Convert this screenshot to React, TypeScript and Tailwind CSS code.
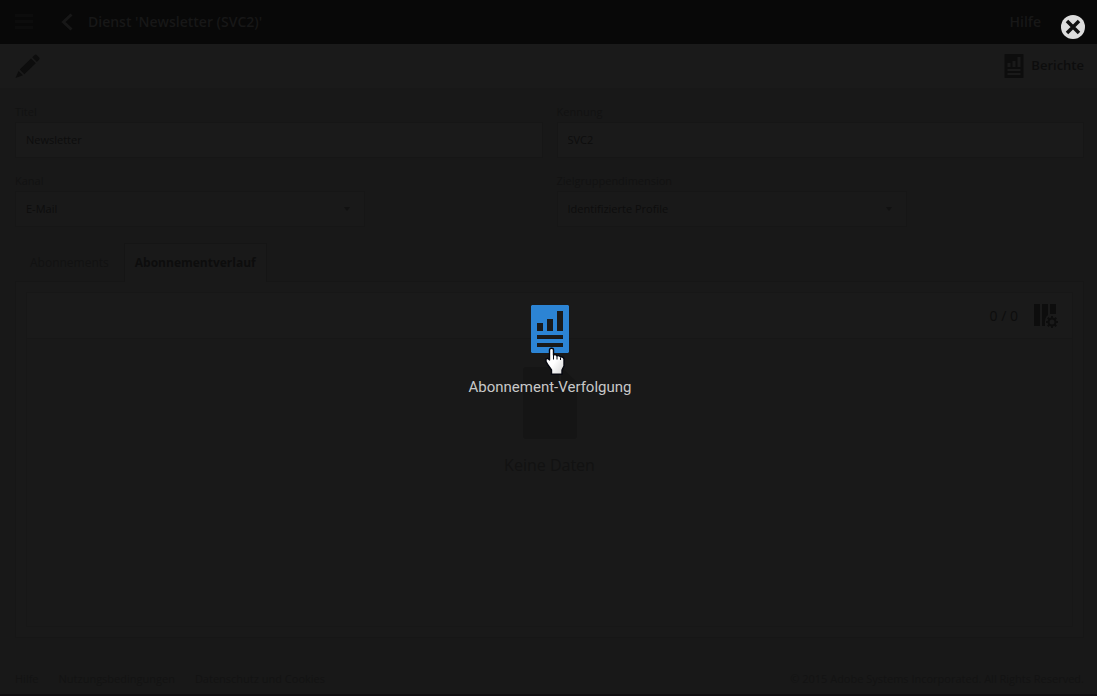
import React from "react";

function ReportIcon({ className }: { className: string }) {
  return (
    <svg viewBox="0 0 38 48" className={className} fill="currentColor" aria-hidden="true">
      <path
        fillRule="evenodd"
        d="M1 0h36l1 1v46l-1 1H1l-1-1V1zM6 18v8h6v-8zM16 14v12h6V14zM26 6v20h6V6zM6 30v4h26v-4zM6 38v4h26v-4z"
      />
    </svg>
  );
}

function PencilIcon() {
  return (
    <svg viewBox="0 0 26 26" className="size-6.5" fill="currentColor" aria-hidden="true">
      <path d="M0.500 25L3.500 18L8 22.200zM4.700 16.600L16 5.500L20.800 10.200L9.300 21.200zM17.200 4.300L19.700 2q1-1 2 0l2.500 2.500q1 1 0 2l-2.300 2.500z" />
    </svg>
  );
}

function ColumnsIcon() {
  return (
    <svg viewBox="0 0 24 24" className="size-6" aria-hidden="true">
      <path fill="currentColor" d="M0 0h6v22H0zM8 0h6v11q-4 3-3 11H8zM16 0h6v10h-6z" />
      <circle cx="18" cy="18" r="3.500" fill="none" stroke="currentColor" strokeWidth="2" />
      <path
        stroke="currentColor"
        strokeWidth="2"
        d="M18 12v2M18 22v2M12 18h2M22 18h2M13.800 13.800l1.400 1.400M20.800 20.800l1.400 1.400M13.800 22.200l1.400-1.400M20.800 15.200l1.400-1.400"
      />
    </svg>
  );
}

function HandPointer() {
  return (
    <svg viewBox="0 0 22 28" className="absolute top-[42px] left-3.5 h-7 w-5.5" aria-hidden="true">
      <defs>
        <linearGradient id="hand" x1="0" y1="0" x2="1" y2="1">
          <stop offset="0.500" stopColor="#ffffff" />
          <stop offset="1" stopColor="#d4d4d4" />
        </linearGradient>
      </defs>
      <path
        d="M4.500 3q0-1.700 2-1.700T8.500 3v5q2-1 3.500 .8 2-.8 3.500 1 3-.3 3.500 2.200v7l-2 4v4.300H6.500V23L3 18l-2-3.500v-2.500q2-1.500 3.500 1z"
        fill="url(#hand)"
        stroke="#05070f"
        strokeWidth="1.400"
        strokeLinejoin="round"
      />
      <path d="M8.500 8v4.500M12 9V12.500M15.500 10.500V13" stroke="#05070f" strokeWidth="1" />
    </svg>
  );
}

function TextField({ id, label, value }: { id: string; label: string; value: string }) {
  return (
    <div className="flex flex-col">
      <label htmlFor={id} className="h-4.5 text-[11px] leading-4 text-[#121212]">
        {label}
      </label>
      <input
        id={id}
        defaultValue={value}
        className="h-9 w-full border border-[#161616] bg-[#1a1a1a] px-2.5 pb-0.5 text-[11px] text-[#0d0d0d] outline-none"
      />
    </div>
  );
}

function SelectField({ id, label, value }: { id: string; label: string; value: string }) {
  return (
    <div className="flex flex-col">
      <label htmlFor={id} className="h-4.5 text-[11px] leading-4 text-[#121212]">
        {label}
      </label>
      <div className="relative w-full max-w-[350px]">
        <select
          id={id}
          className="h-9 w-full appearance-none border border-[#161616] bg-[#191919] px-2.5 text-[11px] text-[#0d0d0d] outline-none"
        >
          <option>{value}</option>
        </select>
        <svg viewBox="0 0 8 4" className="pointer-events-none absolute top-4 right-3.5 h-1 w-2" aria-hidden="true">
          <path d="M1 0h6L4 4z" fill="#111111" />
        </svg>
      </div>
    </div>
  );
}

export default function App() {
  return (
    <div className="relative flex min-h-screen flex-col border-b-2 border-[#100e10] bg-[#181818] font-['Open_Sans',sans-serif] text-[#0d0d0d]">
      <header className="flex h-11 items-center bg-[#080808] pr-14 pl-3.75 text-[#171717]">
        <button type="button" aria-label="Menü" className="text-[#0c0c0c]">
          <svg viewBox="0 0 18 16" className="h-4 w-4.5" fill="currentColor" aria-hidden="true">
            <path d="M0 0h18v3H0zM0 6h18v3H0zM0 12h18v3H0z" />
          </svg>
        </button>
        <button type="button" aria-label="Zurück" className="ml-7">
          <svg viewBox="0 0 12 18" className="h-4.5 w-3" fill="none" stroke="currentColor" strokeWidth="3" aria-hidden="true">
            <path d="M10.500 1.500L2.500 9l8 7.500" />
          </svg>
        </button>
        <h1 className="ml-3.75 text-sm font-semibold">Dienst 'Newsletter (SVC2)'</h1>
        <a href="#hilfe" className="ml-auto text-sm font-semibold">
          Hilfe
        </a>
      </header>

      <div className="flex h-11 items-center justify-between bg-[#1a1a1a] pr-3.25 pl-3.75">
        <button type="button" aria-label="Bearbeiten">
          <PencilIcon />
        </button>
        <button type="button" className="flex items-center gap-1.75 text-[13px] font-semibold">
          <ReportIcon className="h-6 w-5" />
          Berichte
        </button>
      </div>

      <main className="flex flex-1 flex-col pt-4 pr-3.25 pl-3.75">
        <form className="grid grid-cols-2 gap-x-3.5 gap-y-3.75">
          <TextField id="titel" label="Titel" value="Newsletter" />
          <TextField id="kennung" label="Kennung" value="SVC2" />
          <SelectField id="kanal" label="Kanal" value="E-Mail" />
          <SelectField id="ziel" label="Zielgruppendimension" value="Identifizierte Profile" />
        </form>

        <div role="tablist" className="mt-4 -mb-px flex h-9.75 text-xs">
          <button type="button" role="tab" aria-selected="false" className="px-3.75 text-[#121212]">
            Abonnements
          </button>
          <button
            type="button"
            role="tab"
            aria-selected="true"
            className="relative border border-b-0 border-[#151515] bg-[#191919] px-2.5 font-bold"
          >
            Abonnementverlauf
          </button>
        </div>

        <section className="flex flex-1 flex-col border border-[#161616] bg-[#191919] p-2.5">
          <div className="flex flex-1 flex-col border border-[#171717] bg-[#1a1a1a]">
            <div className="flex h-11.5 items-center justify-end gap-4 border-b border-[#171717] pr-3.5">
              <span className="text-sm">0 / 0</span>
              <button type="button" aria-label="Spalten konfigurieren">
                <ColumnsIcon />
              </button>
            </div>
            <div className="flex flex-1 flex-col items-center gap-3.5 bg-[#191919] pt-7">
              <svg viewBox="0 0 54 72" className="h-18 w-13.5" fill="#151515" aria-hidden="true">
                <path d="M2 0h34v17h18v53l-2 2H2l-2-2V2zM38 0l16 15H38z" />
              </svg>
              <p className="text-base text-[#121212]">Keine Daten</p>
            </div>
          </div>
        </section>
      </main>

      <footer className="flex h-14 items-end justify-between pr-3.25 pb-1.75 pl-3.75 text-[11px] text-[#131313]">
        <nav className="flex gap-5">
          <a href="#hilfe">Hilfe</a>
          <a href="#nutzung">Nutzungsbedingungen</a>
          <a href="#datenschutz">Datenschutz und Cookies</a>
        </nav>
        <p>© 2015 Adobe Systems Incorporated. All Rights Reserved.</p>
      </footer>

      <div role="dialog" aria-label="Berichte" className="absolute inset-0 flex items-center justify-center pt-2.5 pl-0.75">
        <button type="button" aria-label="Schließen" className="absolute top-3.5 right-2.75">
          <svg viewBox="0 0 26 26" className="size-6.5" aria-hidden="true">
            <circle cx="13" cy="13" r="12" fill="#dcdcdc" />
            <path d="M7 7l12 12M19 7l-12 12" stroke="#101010" strokeWidth="3.500" />
          </svg>
        </button>
        <button
          type="button"
          className="flex flex-col items-center gap-5.5 font-['Roboto',sans-serif] text-[15px] leading-6 text-[#c8c8c8]"
        >
          <span className="relative">
            <ReportIcon className="h-12 w-9.5 text-[#2c84d4]" />
            <HandPointer />
          </span>
          Abonnement-Verfolgung
        </button>
      </div>
    </div>
  );
}
